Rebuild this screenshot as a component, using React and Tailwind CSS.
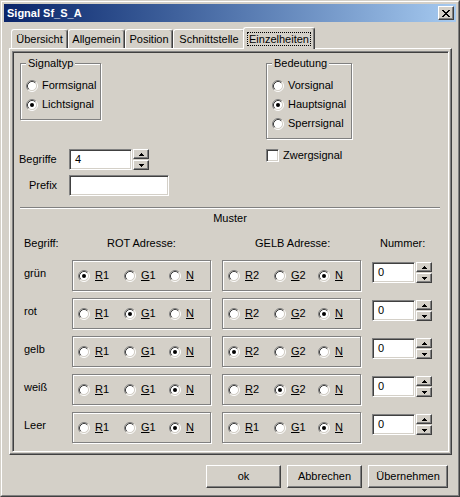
import React from 'react';

// Windows classic 3D edges
const raised =
  'border border-t-white border-l-white border-r-[#404040] border-b-[#404040] shadow-[inset_-1px_-1px_0_#808080]';
const sunken =
  'border border-t-[#808080] border-l-[#808080] border-r-white border-b-white shadow-[inset_1px_1px_0_#404040,inset_-1px_-1px_0_#d4d0c8]';
const etched = 'border border-[#808080] shadow-[inset_1px_1px_0_#fff,1px_1px_0_#fff]';

const rows = [
  { name: 'grün', rot: 0, gelb: 2, second: ['R2', 'G2'] },
  { name: 'rot', rot: 1, gelb: 2, second: ['R2', 'G2'] },
  { name: 'gelb', rot: 2, gelb: 0, second: ['R2', 'G2'] },
  { name: 'weiß', rot: 2, gelb: 1, second: ['R2', 'G2'] },
  { name: 'Leer', rot: 2, gelb: 2, second: ['R1', 'G1'] },
];

function Radio({ checked }) {
  return (
    <svg width="12" height="12" viewBox="0 0 12 12" className="shrink-0">
      <circle cx="6" cy="6" r="4.5" fill="#fff" />
      <path d="M2.11 9.89A5.5 5.5 0 0 1 9.89 2.11" stroke="#808080" fill="none" />
      <path d="M9.89 2.11A5.5 5.5 0 0 1 2.11 9.89" stroke="#fff" fill="none" />
      <path d="M2.82 9.18A4.5 4.5 0 0 1 9.18 2.82" stroke="#404040" fill="none" />
      <path d="M9.18 2.82A4.5 4.5 0 0 1 2.82 9.18" stroke="#d4d0c8" fill="none" />
      {checked && <circle cx="6" cy="6" r="2" fill="#000" />}
    </svg>
  );
}

function Option({ checked, children, className = '', gap = 'gap-[5px]' }) {
  return (
    <div className={`flex items-center ${gap} ${className}`}>
      <Radio checked={checked} />
      <span>{children}</span>
    </div>
  );
}

// label like "R1" with the accelerator letter underlined
function Accel({ text }) {
  return (
    <>
      <span className="underline">{text[0]}</span>
      {text.slice(1)}
    </>
  );
}

function Arrow({ down }) {
  return (
    <svg width="5" height="3" viewBox="0 0 5 3" className={down ? 'rotate-180' : ''}>
      <rect x="2" y="0" width="1" height="1" fill="#000" />
      <rect x="1" y="1" width="3" height="1" fill="#000" />
      <rect x="0" y="2" width="5" height="1" fill="#000" />
    </svg>
  );
}

function Spinner() {
  return (
    <div className="flex flex-col gap-[1px] w-[16px] h-[21px]">
      <div className={`h-[10px] flex items-center justify-center ${raised}`}>
        <Arrow />
      </div>
      <div className={`h-[10px] flex items-center justify-center ${raised}`}>
        <Arrow down />
      </div>
    </div>
  );
}

function Field({ value, className = '' }) {
  return (
    <div className={`h-[21px] bg-white flex items-center pl-[5px] ${sunken} ${className}`}>
      {value}
    </div>
  );
}

function Group({ title, className = '', children }) {
  return (
    <fieldset className={`${etched} ${className}`}>
      <legend className="ml-[5px] px-[2px] bg-[#d4d0c8] leading-[13px]">{title}</legend>
      <div className="flex flex-col pt-[6px] pb-[5px] pl-[5px]">{children}</div>
    </fieldset>
  );
}

function Tab({ label, width, active }) {
  if (active) {
    return (
      <div
        className={`relative z-10 -mx-[2px] -mb-[1px] h-[22px] ${width} bg-[#d4d0c8] rounded-t-[3px] border border-b-0 border-t-white border-l-white border-r-[#404040] shadow-[inset_-1px_0_0_#808080] pl-[3px] pt-[4px]`}
      >
        <span className="block w-[64px] text-center leading-[12px] border border-dotted border-black">
          {label}
        </span>
      </div>
    );
  }
  return (
    <div
      className={`h-[19px] ${width} rounded-t-[3px] border border-b-0 border-t-white border-l-white border-r-[#404040] shadow-[inset_-1px_0_0_#808080] pt-[3px] text-center`}
    >
      {label}
    </div>
  );
}

function CloseGlyph() {
  const px = [
    [0, 0, 2], [6, 0, 2],
    [1, 1, 2], [5, 1, 2],
    [2, 2, 4],
    [3, 3, 2],
    [2, 4, 4],
    [1, 5, 2], [5, 5, 2],
    [0, 6, 2], [6, 6, 2],
  ];
  return (
    <svg width="8" height="7" viewBox="0 0 8 7">
      {px.map(([x, y, w], i) => (
        <rect key={i} x={x} y={y} width={w} height="1" fill="#000" />
      ))}
    </svg>
  );
}

function Button({ children, width }) {
  return (
    <div className={`h-[23px] ${width} flex items-center justify-center ${raised}`}>
      {children}
    </div>
  );
}

export default function App() {
  return (
    <div className="w-[460px] h-[497px] bg-[#d4d0c8] border border-t-[#d4d0c8] border-l-[#d4d0c8] border-r-[#404040] border-b-[#404040] font-['Liberation_Sans',Arial,sans-serif] text-[11px] leading-[13px] text-black select-none">
      <div className="h-full border border-t-white border-l-white border-r-[#808080] border-b-[#808080] p-[2px] flex flex-col">
        {/* Title bar */}
        <div className="h-[18px] shrink-0 flex items-center justify-between bg-linear-to-r from-[#0a246a] to-[#a6caf0] pl-[3px] pr-[2px]">
          <span className="text-white font-bold">Signal Sf_S_A</span>
          <div className={`w-[16px] h-[14px] bg-[#d4d0c8] flex items-center justify-center ${raised}`}>
            <CloseGlyph />
          </div>
        </div>

        {/* Tabs */}
        <div className="mt-[5px] h-[21px] shrink-0 flex items-end pl-[7px]">
          <Tab label="Übersicht" width="w-[57px]" />
          <Tab label="Allgemein" width="w-[57px]" />
          <Tab label="Position" width="w-[48px]" />
          <Tab label="Schnittstelle" width="w-[72px]" />
          <Tab label="Einzelheiten" width="w-[72px]" active />
        </div>

        {/* Tab panel */}
        <div className={`ml-[5px] w-[443px] h-[407px] shrink-0 p-[2px] ${raised}`}>
          <div className={`h-full p-[1px] ${sunken}`}>
            <div className="flex pl-[6px] pt-[4px]">
              <div className="w-[246px]">
                <Group title="Signaltyp" className="w-[81px]">
                  <Option gap="gap-[4px]" className="h-[19px]">Formsignal</Option>
                  <Option gap="gap-[4px]" className="h-[19px]" checked>Lichtsignal</Option>
                </Group>

                <div className="mt-[29px] -ml-[1px] flex items-center">
                  <span className="w-[50px]">Begriffe</span>
                  <Field value="4" className="w-[63px]" />
                  <div className="ml-[1px]">
                    <Spinner />
                  </div>
                </div>
                <div className="mt-[5px] -ml-[1px] flex items-center">
                  <span className="w-[50px] pl-[10px]">Prefix</span>
                  <Field value="" className="w-[100px]" />
                </div>
              </div>

              <div>
                <Group title="Bedeutung" className="w-[86px]">
                  <Option gap="gap-[4px]" className="h-[19px]">Vorsignal</Option>
                  <Option gap="gap-[4px]" className="h-[19px]" checked>Hauptsignal</Option>
                  <Option gap="gap-[4px]" className="h-[19px]">Sperrsignal</Option>
                </Group>
                <div className="mt-[10px] flex items-center gap-[4px]">
                  <div className={`w-[13px] h-[13px] bg-white ${sunken}`} />
                  <span>Zwergsignal</span>
                </div>
              </div>
            </div>

            <div className="mt-[11px] ml-[6px] w-[420px] h-[2px] border-t border-t-[#808080] border-b border-b-white" />
            <div className="mt-[3px] ml-[6px] w-[420px] text-center">Muster</div>

            <div className="mt-[12px] pl-[10px] flex">
              <span className="w-[83px]">Begriff:</span>
              <span className="w-[148px]">ROT Adresse:</span>
              <span className="w-[125px]">GELB Adresse:</span>
              <span>Nummer:</span>
            </div>

            <div className="mt-[10px] pl-[10px] flex flex-col gap-[7px]">
              {rows.map((row) => (
                <div key={row.name} className="flex h-[31px]">
                  <span className="w-[48px] pt-[7px]">{row.name}</span>
                  <div className={`w-[139px] h-full flex items-center pl-[5px] ${etched}`}>
                    <Option className="w-[46px]" checked={row.rot === 0}><Accel text="R1" /></Option>
                    <Option className="w-[45px]" checked={row.rot === 1}><Accel text="G1" /></Option>
                    <Option checked={row.rot === 2}><Accel text="N" /></Option>
                  </div>
                  <div className={`ml-[11px] w-[139px] h-full flex items-center pl-[5px] ${etched}`}>
                    <Option className="w-[46px]" checked={row.gelb === 0}><Accel text={row.second[0]} /></Option>
                    <Option className="w-[44px]" checked={row.gelb === 1}><Accel text={row.second[1]} /></Option>
                    <Option checked={row.gelb === 2}><Accel text="N" /></Option>
                  </div>
                  <Field value="0" className="ml-[11px] mt-[2px] w-[43px]" />
                  <div className="ml-[1px] mt-[2px]">
                    <Spinner />
                  </div>
                </div>
              ))}
            </div>
          </div>
        </div>

        {/* Dialog buttons */}
        <div className="mt-[10px] pr-[8px] flex justify-end gap-[6px]">
          <Button width="w-[75px]">ok</Button>
          <Button width="w-[75px]">Abbrechen</Button>
          <Button width="w-[80px]">Übernehmen</Button>
        </div>
      </div>
    </div>
  );
}
